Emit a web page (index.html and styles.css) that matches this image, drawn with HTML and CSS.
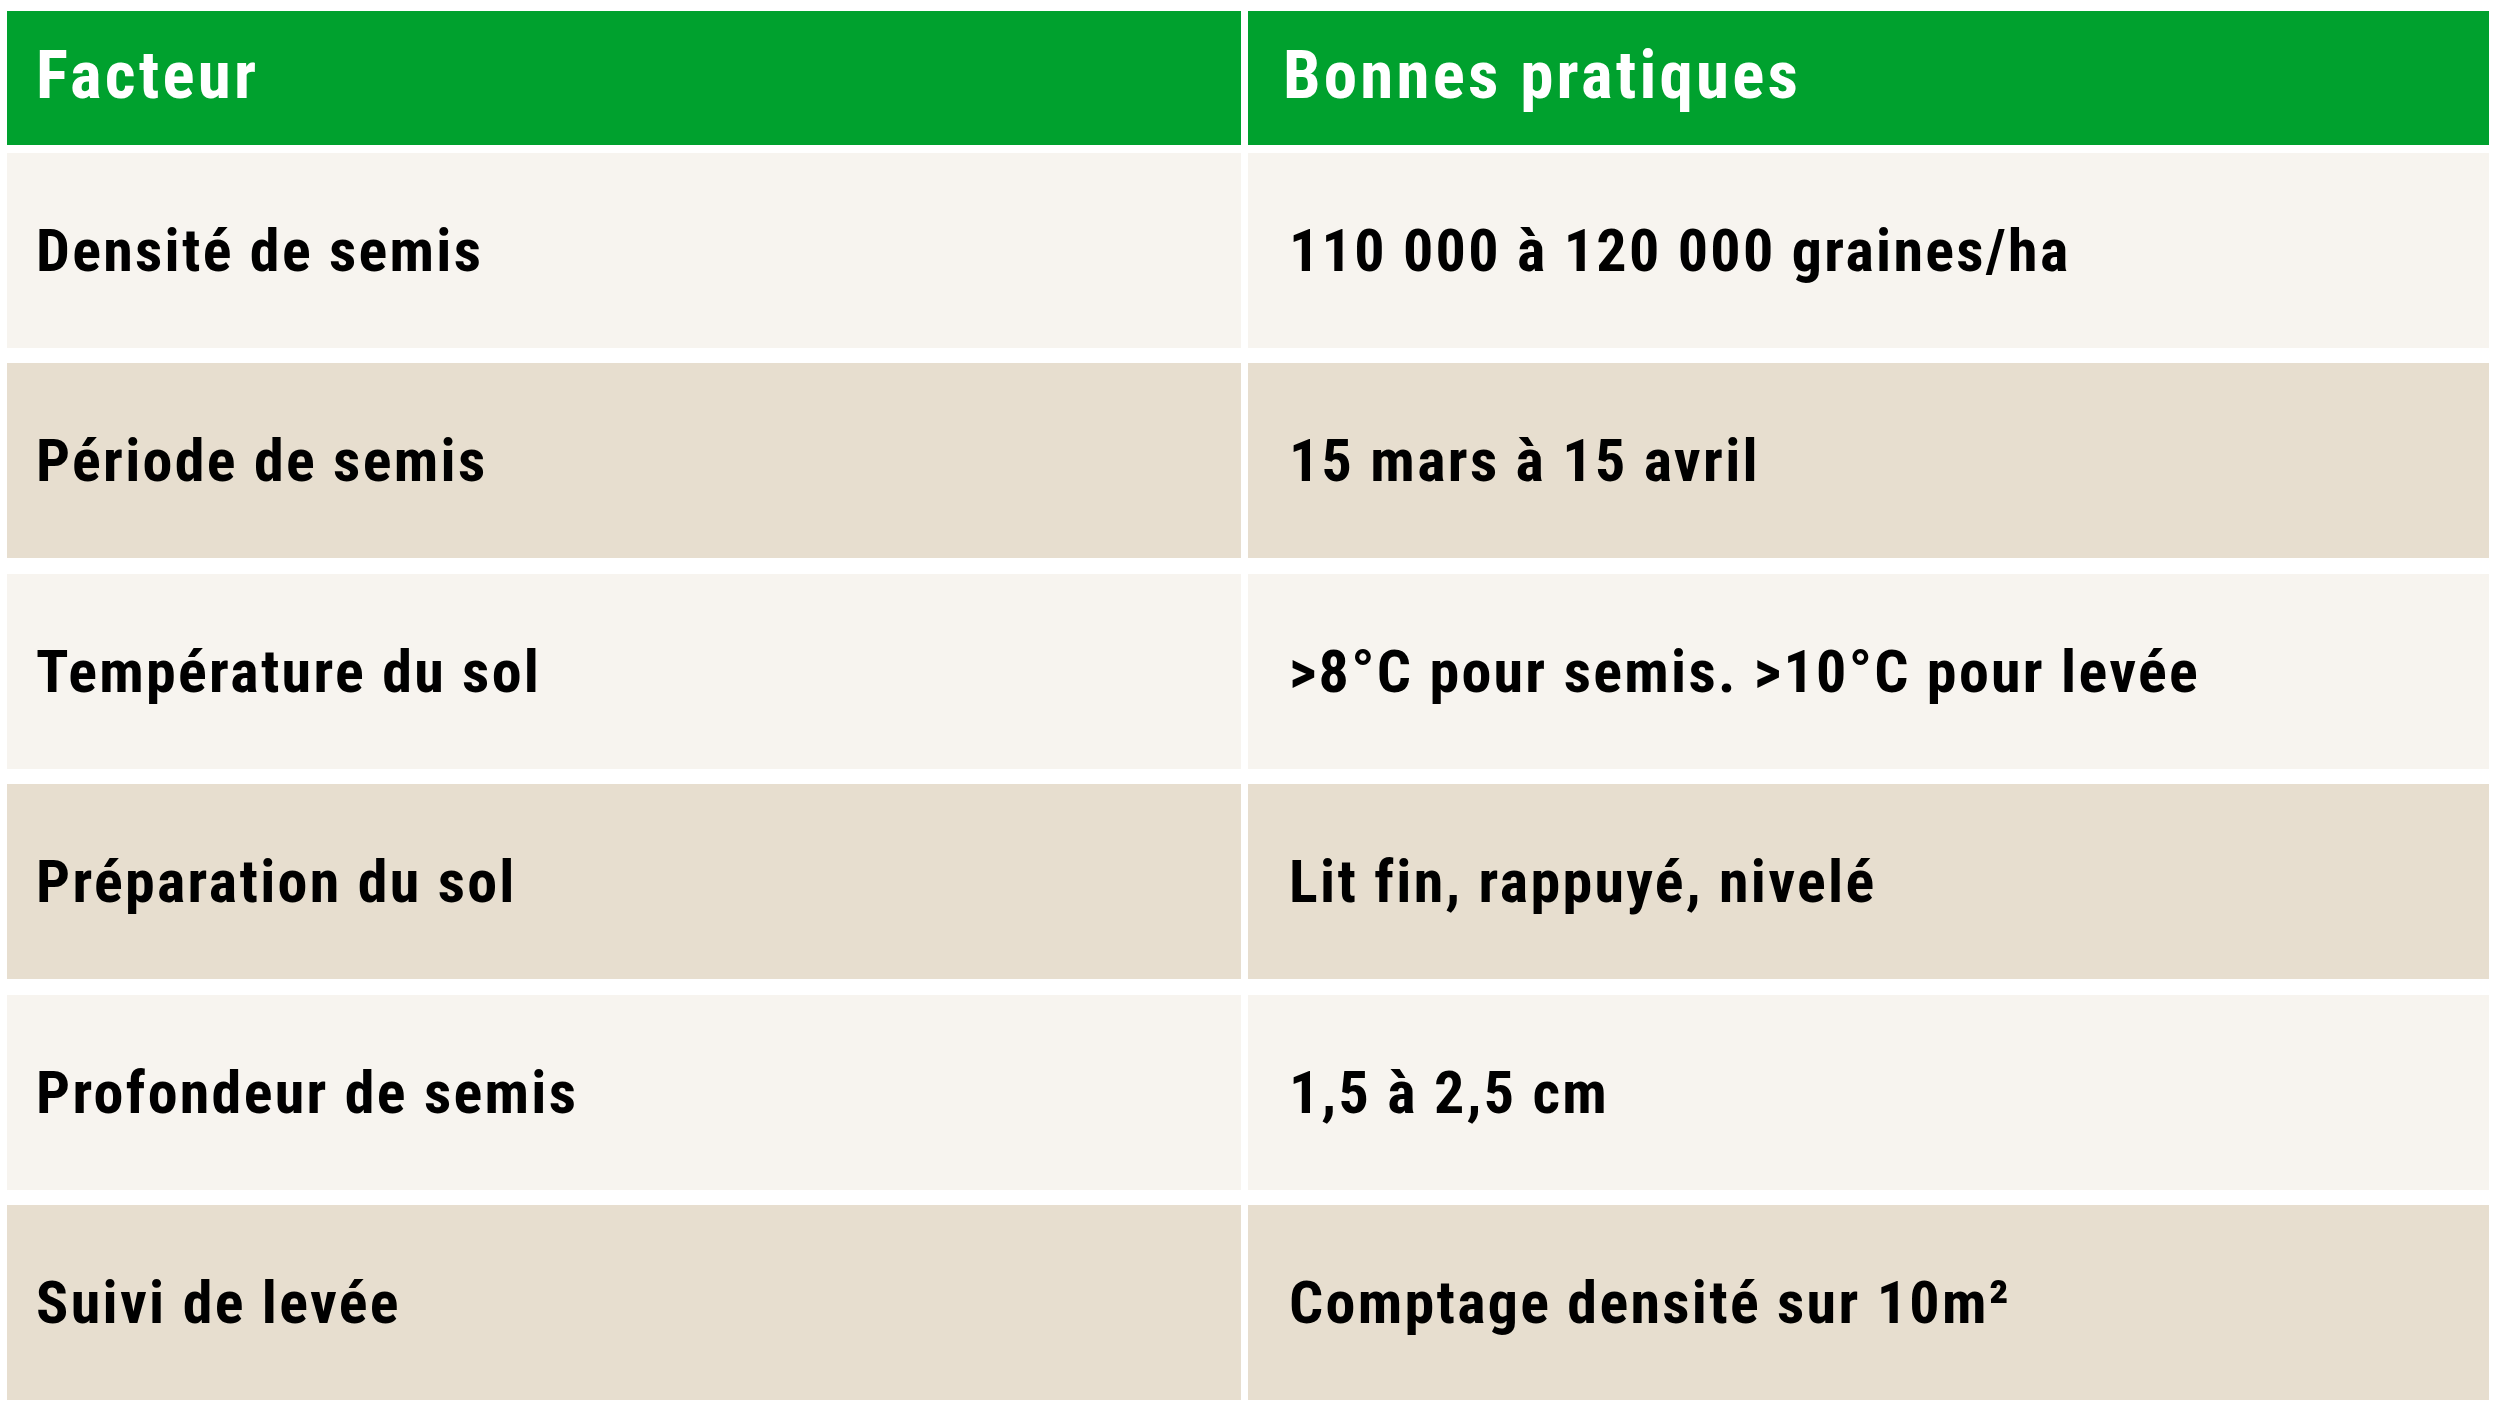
FILE: index.html
```html
<!DOCTYPE html>
<html lang="fr">
<head>
<meta charset="utf-8">
<title>Facteurs et bonnes pratiques de semis</title>
<link rel="stylesheet" href="styles.css">
</head>
<body>
<div class="table">
  <div class="row head">
    <div class="cell c1">Facteur</div>
    <div class="cell c2">Bonnes pratiques</div>
  </div>
  <div class="body">
    <div class="row light">
      <div class="cell c1">Densité de semis</div>
      <div class="cell c2">110 000 à 120 000 graines/ha</div>
    </div>
    <div class="row dark">
      <div class="cell c1">Période de semis</div>
      <div class="cell c2">15 mars à 15 avril</div>
    </div>
    <div class="row light">
      <div class="cell c1">Température du sol</div>
      <div class="cell c2">&gt;8°C pour semis. &gt;10°C pour levée</div>
    </div>
    <div class="row dark">
      <div class="cell c1">Préparation du sol</div>
      <div class="cell c2">Lit fin, rappuyé, nivelé</div>
    </div>
    <div class="row light">
      <div class="cell c1">Profondeur de semis</div>
      <div class="cell c2">1,5 à 2,5 cm</div>
    </div>
    <div class="row dark">
      <div class="cell c1">Suivi de levée</div>
      <div class="cell c2">Comptage densité sur 10m²</div>
    </div>
  </div>
</div>
</body>
</html>
```
FILE: styles.css
```css
html, body {
  margin: 0;
  padding: 0;
  background: #ffffff;
}
body {
  width: 2500px;
  height: 1408px;
  overflow: hidden;
  font-family: "Roboto Condensed", "Roboto", "Liberation Sans", sans-serif;
  font-weight: 700;
}
.table {
  margin: 11px 0 0 7px;
  width: 2482px;
  display: flex;
  flex-direction: column;
  gap: 8px;
}
.body {
  display: flex;
  flex-direction: column;
  gap: 15.4px;
}
.row {
  display: grid;
  grid-template-columns: 1234px 1241px;
  column-gap: 7px;
}
.cell {
  display: flex;
  align-items: center;
  white-space: nowrap;
  box-sizing: border-box;
}
.head .cell {
  height: 134px;
  background: #00a12e;
  color: #ffffff;
  font-size: 67px;
  letter-spacing: 3.2px;
  padding-bottom: 7px;
}
.head .c1 { padding-left: 29px; }
.head .c2 { padding-left: 35px; }
.body .cell {
  height: 195px;
  color: #000000;
  font-size: 60px;
  letter-spacing: 2.3px;
}
.body .c1 { padding-left: 29px; }
.body .c2 { padding-left: 41px; }
.light .cell { background: #f7f4ef; }
.dark .cell { background: #e7decf; }
```
